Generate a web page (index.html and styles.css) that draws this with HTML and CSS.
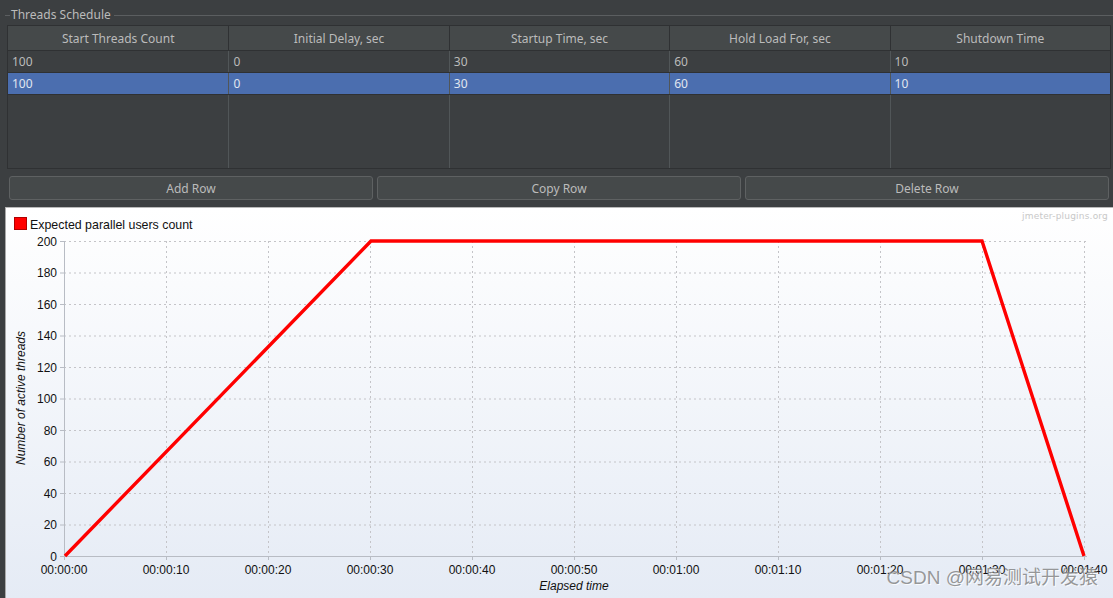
FILE: index.html
```html
<!DOCTYPE html>
<html>
<head>
<meta charset="utf-8">
<link rel="stylesheet" href="styles.css">
</head>
<body>
<div class="page">
  <div class="group-title"><span class="tick"></span><span class="title-text">Threads Schedule</span><span class="rule"></span></div>
  <div class="table">
    <div class="row head">
      <div class="cell">Start Threads Count</div>
      <div class="cell">Initial Delay, sec</div>
      <div class="cell">Startup Time, sec</div>
      <div class="cell">Hold Load For, sec</div>
      <div class="cell">Shutdown Time</div>
    </div>
    <div class="row">
      <div class="cell">100</div><div class="cell">0</div><div class="cell">30</div><div class="cell">60</div><div class="cell">10</div>
    </div>
    <div class="row selected">
      <div class="cell">100</div><div class="cell">0</div><div class="cell">30</div><div class="cell">60</div><div class="cell">10</div>
    </div>
    <div class="row filler">
      <div class="cell"></div><div class="cell"></div><div class="cell"></div><div class="cell"></div><div class="cell"></div>
    </div>
  </div>
  <div class="buttons">
    <div class="btn">Add Row</div>
    <div class="btn">Copy Row</div>
    <div class="btn">Delete Row</div>
  </div>
  <div class="chart">
    <svg class="plot" width="1107" height="390" viewBox="6 208 1107 390" xmlns="http://www.w3.org/2000/svg">
      <defs>
        <linearGradient id="bg" x1="0" y1="0" x2="0" y2="1">
          <stop offset="0" stop-color="#ffffff"/>
          <stop offset="1" stop-color="#e5ebf5"/>
        </linearGradient>
      </defs>
      <rect x="6" y="208" width="1107" height="390" fill="url(#bg)"/>
      <text class="wm" x="1108" y="219" text-anchor="end">jmeter-plugins.org</text>
      <rect x="14.5" y="217.5" width="12" height="12" fill="#ff0000" stroke="#b00000"/>
      <text class="lbl legend" x="30" y="228.5">Expected parallel users count</text>
      <g class="grid" stroke="#c4c4c8" stroke-width="1" stroke-dasharray="2,3" fill="none">
        <path d="M64 241.5H1086M64 273H1086M64 304.5H1086M64 336H1086M64 367.5H1086M64 399H1086M64 430.5H1086M64 462H1086M64 493.5H1086M64 525H1086"/>
        <path d="M166.5 241V556M268.5 241V556M370.5 241V556M472.5 241V556M574.5 241V556M676.5 241V556M778.5 241V556M880.5 241V556M982.5 241V556M1084.5 241V556"/>
      </g>
      <g stroke="#b8bcc4" stroke-width="1" fill="none">
        <path d="M64.5 241V557M64 556.5H1087"/>
        <path d="M60 241.5H64M60 273H64M60 304.5H64M60 336H64M60 367.5H64M60 399H64M60 430.5H64M60 462H64M60 493.5H64M60 525H64M60 556.5H64"/>
        <path d="M64.5 557V560M166.5 557V560M268.5 557V560M370.5 557V560M472.5 557V560M574.5 557V560M676.5 557V560M778.5 557V560M880.5 557V560M982.5 557V560M1084.5 557V560"/>
      </g>
      <g class="lbl" text-anchor="end">
        <text x="57" y="245.5">200</text>
        <text x="57" y="277">180</text>
        <text x="57" y="308.5">160</text>
        <text x="57" y="340">140</text>
        <text x="57" y="371.5">120</text>
        <text x="57" y="403">100</text>
        <text x="57" y="434.5">80</text>
        <text x="57" y="466">60</text>
        <text x="57" y="497.5">40</text>
        <text x="57" y="529">20</text>
        <text x="57" y="560.5">0</text>
      </g>
      <g class="lbl" text-anchor="middle">
        <text x="64" y="574">00:00:00</text>
        <text x="166" y="574">00:00:10</text>
        <text x="268" y="574">00:00:20</text>
        <text x="370" y="574">00:00:30</text>
        <text x="472" y="574">00:00:40</text>
        <text x="574" y="574">00:00:50</text>
        <text x="676" y="574">00:01:00</text>
        <text x="778" y="574">00:01:10</text>
        <text x="880" y="574">00:01:20</text>
        <text x="982" y="574">00:01:30</text>
        <text x="1084" y="574">00:01:40</text>
      </g>
      <text class="lbl it" x="574" y="590" text-anchor="middle">Elapsed time</text>
      <text class="lbl it" x="0" y="0" text-anchor="middle" transform="translate(25 398) rotate(-90)">Number of active threads</text>
      <polyline points="65,556 371,241 982,241 1084,556" fill="none" stroke="#ff0000" stroke-width="3.4" stroke-linejoin="miter"/>
    </svg>
    <div class="csdn">CSDN @网易测试开发猿</div>
  </div>
</div>
</body>
</html>
```
FILE: styles.css
```css
html, body {
  margin: 0;
  padding: 0;
}
body {
  background: #3c3f41;
  width: 1113px;
  height: 598px;
  overflow: hidden;
  font-family: "Noto Sans", "Open Sans", sans-serif;
  font-size: 12px;
  color: #bbbbbb;
}
.page {
  display: flex;
  flex-direction: column;
}
.group-title {
  display: flex;
  align-items: center;
  height: 20px;
  margin-top: 5px;
}
.tick {
  width: 5px;
  margin-left: 5px;
  border-top: 1px solid #5b5e60;
}
.title-text {
  padding: 0 3px 0 1px;
  color: #bbbbbb;
  line-height: 16px;
}
.rule {
  flex: 1;
  border-top: 1px solid #5b5e60;
}
.table {
  margin-left: 7px;
  width: 1104px;
  border-left: 1px solid #2f3133;
  border-right: 1px solid #2f3133;
  border-bottom: 1px solid #2f3133;
  box-sizing: border-box;
  display: flex;
  flex-direction: column;
}
.row {
  display: grid;
  grid-template-columns: repeat(5, 1fr);
  height: 22px;
  border-bottom: 1px solid #2f3133;
  box-sizing: border-box;
}
.row .cell {
  border-left: 1px solid #515658;
  padding-left: 4px;
  line-height: 21px;
  white-space: nowrap;
  overflow: hidden;
}
.row .cell:first-child {
  border-left: none;
}
.head {
  height: 26px;
  background: #45494a;
  border-top: 1px solid #2f3133;
  border-bottom: 1px solid #2f3133;
}
.head .cell {
  text-align: center;
  padding-left: 0;
  padding-top: 1px;
  line-height: 23px;
  border-left-color: #2f3133;
}
.selected {
  background: #4b6eaf;
  color: #e0e6f0;
}
.filler {
  height: 73px;
  border-bottom: none;
}
.buttons {
  display: flex;
  gap: 4px;
  margin: 7px 0 0 9px;
}
.btn {
  width: 364px;
  height: 24px;
  box-sizing: border-box;
  border: 1px solid #5e6162;
  border-radius: 3px;
  background: #45494a;
  text-align: center;
  padding-top: 1px;
  line-height: 21px;
  color: #bbbbbb;
}
.chart {
  position: relative;
  margin: 7px 0 0 5px;
  width: 1108px;
  height: 391px;
  border-top: 1px solid #b9b9b9;
  border-left: 1px solid #a9a9a9;
  box-sizing: border-box;
  background: #ffffff;
}
.plot {
  display: block;
}
.lbl {
  font-family: "Liberation Sans", Arial, sans-serif;
  font-size: 12px;
  fill: #111111;
}
.legend {
  font-size: 12.4px;
}
.it {
  font-style: italic;
}
.wm {
  font-family: "DejaVu Sans", sans-serif;
  font-size: 9px;
  letter-spacing: 0.2px;
  fill: #c8c8c8;
}
.csdn {
  position: absolute;
  right: 15px;
  bottom: 9px;
  font-family: "Liberation Sans", "Noto Sans CJK SC", sans-serif;
  font-size: 19px;
  color: rgba(120, 120, 120, 0.75);
  text-shadow: 1px 1px 0 rgba(255, 255, 255, 0.8);
  white-space: nowrap;
}
```
